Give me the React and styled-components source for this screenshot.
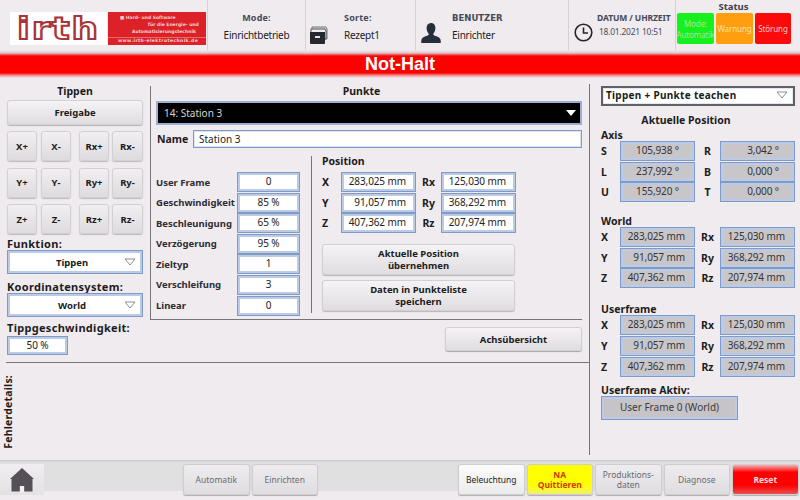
import React from 'react';
import styled, { createGlobalStyle } from 'styled-components';

const PAGE = '#f0ebef';
const LABEL = '#1c1c20';

const axisRows = [
  ['S', '105,938 °', 'R', '3,042 °'],
  ['L', '237,992 °', 'B', '0,000 °'],
  ['U', '155,920 °', 'T', '0,000 °'],
];
const poseRows = [
  ['X', '283,025 mm', 'Rx', '125,030 mm'],
  ['Y', '91,057 mm', 'Ry', '368,292 mm'],
  ['Z', '407,362 mm', 'Rz', '207,974 mm'],
];
const jogRows = [
  ['X+', 'X-', 'Rx+', 'Rx-'],
  ['Y+', 'Y-', 'Ry+', 'Ry-'],
  ['Z+', 'Z-', 'Rz+', 'Rz-'],
];
const pointFields = [
  ['User Frame', '0'],
  ['Geschwindigkeit', '85 %'],
  ['Beschleunigung', '65 %'],
  ['Verzögerung', '95 %'],
  ['Zieltyp', '1'],
  ['Verschleifung', '3'],
  ['Linear', '0'],
];

function Triangle({ dark }) {
  return (
    <svg width="12" height="8" viewBox="0 0 12 8">
      {dark ? (
        <path d="M1 1h10L6 7z" fill="#fff" />
      ) : (
        <path d="M1 1h10L6 7z" fill="#fff" stroke="#8d8d8d" />
      )}
    </svg>
  );
}

function DrawerIcon() {
  return (
    <svg width="19" height="19" viewBox="0 0 19 19">
      <path d="M3 1h14l1 2v10H3z" fill="#d8d8d8" stroke="#77777b" />
      <path d="M2 3h14l1 2v8H2z" fill="#eee" stroke="#55555b" />
      <path d="M1 6h15v11a1 1 0 0 1-1 1H2a1 1 0 0 1-1-1z" fill="#25282c" />
      <rect x="6" y="10" width="5" height="2" fill="#e4e4e4" />
    </svg>
  );
}

function UserIcon() {
  return (
    <svg width="20" height="20" viewBox="0 0 20 20">
      <path
        d="M10 0c3 0 4.400 2.200 4.400 5 0 2.400-.9 4.300-2 5.400v1.700c1 .8 6.400 1.800 7.100 4.400.2 1 .3 2 .3 3.500H.2c0-1.500.1-2.500.3-3.500.7-2.600 6.100-3.600 7.100-4.400v-1.700c-1.100-1.100-2-3-2-5.400C5.600 2.200 7 0 10 0z"
        fill="#26303a"
      />
    </svg>
  );
}

function ClockIcon() {
  return (
    <svg width="19" height="19" viewBox="0 0 19 19" fill="none" stroke="#23262b">
      <circle cx="9.500" cy="9.500" r="8.300" strokeWidth="1.600" />
      <path d="M9.500 4.500v5.500h4.500" strokeWidth="1.600" />
    </svg>
  );
}

function HouseIcon() {
  return (
    <svg width="24" height="24" viewBox="0 0 24 24">
      <path
        d="M12 0L24 11h-1.500v12.500H14.200V18H9.800v5.500H1.500V11H0z"
        fill="#555058"
      />
      <rect x="10" y="18" width="4" height="6" fill="#f4f0f2" />
    </svg>
  );
}

function Field({ value, $gray, $align, $pad, $width }) {
  return (
    <FieldFrame $gray={$gray} $width={$width}>
      <FieldInner $gray={$gray} $align={$align} $pad={$pad}>
        {value}
      </FieldInner>
    </FieldFrame>
  );
}

function PoseGrid({ rows, gray, pad }) {
  return (
    <Pose>
      {rows.map((r) => (
        <React.Fragment key={r[0]}>
          <PoseLabel>{r[0]}</PoseLabel>
          <Field value={r[1]} $gray={gray} $align="right" $pad={pad} />
          <PoseLabel $second>{r[2]}</PoseLabel>
          <Field value={r[3]} $gray={gray} $align="right" $pad={pad} />
        </React.Fragment>
      ))}
    </Pose>
  );
}

export default function App() {
  return (
    <>
      <Global />
      <Screen>
        <Header>
          <Logo>
            <LogoMark>
              <LogoWord>irth</LogoWord>
            </LogoMark>
            <LogoClaim>
              <ClaimLine $indent={12}>■ Hard- und Software</ClaimLine>
              <ClaimLine $indent={40}>für die Energie- und</ClaimLine>
              <ClaimLine $indent={24}>Automatisierungstechnik</ClaimLine>
              <ClaimWeb>www.irth-elektrotechnik.de</ClaimWeb>
            </LogoClaim>
          </Logo>
          <HeadCell $w={98} $center>
            <SoftLabel>Mode:</SoftLabel>
            <HeadValue>Einrichtbetrieb</HeadValue>
          </HeadCell>
          <HeadCell $w={110} $row>
            <HeadIcon $top={26}><DrawerIcon /></HeadIcon>
            <HeadStack $left={16}>
              <SoftLabel>Sorte:</SoftLabel>
              <HeadValue>Rezept1</HeadValue>
            </HeadStack>
          </HeadCell>
          <HeadCell $w={153} $row $pad={5}>
            <HeadIcon $top={23}><UserIcon /></HeadIcon>
            <HeadStack $left={11}>
              <HeadLabel>BENUTZER</HeadLabel>
              <HeadValue>Einrichter</HeadValue>
            </HeadStack>
          </HeadCell>
          <HeadCell $w={107} $row $pad={5}>
            <HeadIcon $top={23}><ClockIcon /></HeadIcon>
            <HeadStack $left={4}>
              <DateLabel>DATUM / UHRZEIT</DateLabel>
              <DateValue>18.01.2021 10:51</DateValue>
            </HeadStack>
          </HeadCell>
          <StatusCell>
            <StatusTitle>Status</StatusTitle>
            <StatusRow>
              <Lamp $bg="#16f01c" $w={37} $fg="#a8e6a0">Mode:<br />Automatik</Lamp>
              <Lamp $bg="#ff9f10" $w={37} $fg="#f6e0a8">Warnung</Lamp>
              <Lamp $bg="#fb0a0a" $w={36} $fg="#f6c8c8">Störung</Lamp>
            </StatusRow>
          </StatusCell>
        </Header>

        <Banner>
          <BannerText>Not-Halt</BannerText>
        </Banner>

        <Main>
          <WorkArea>
            <TopArea>
              <LeftColumn>
                <ColumnTitle>Tippen</ColumnTitle>
                <GrayButton $h={25}>Freigabe</GrayButton>
                <JogGrid>
                  {jogRows.flat().map((j) => (
                    <JogButton key={j}>{j}</JogButton>
                  ))}
                </JogGrid>
                <SideLabel $top={4}>Funktion:</SideLabel>
                <SelectBox>
                  <SelectText>Tippen</SelectText>
                  <Triangle />
                </SelectBox>
                <SideLabel $top={7}>Koordinatensystem:</SideLabel>
                <SelectBox>
                  <SelectText>World</SelectText>
                  <Triangle />
                </SelectBox>
                <SideLabel $top={5}>Tippgeschwindigkeit:</SideLabel>
                <SpeedGap>
                  <Field value="50 %" $width={61} />
                </SpeedGap>
              </LeftColumn>

              <CenterColumn>
                <PointsPanel>
                  <PanelTitle>Punkte</PanelTitle>
                  <PointSelect>
                    <span>14: Station 3</span>
                    <Triangle dark />
                  </PointSelect>
                  <NameRow>
                    <NameLabel>Name</NameLabel>
                    <NameInput>
                      <NameText>Station 3</NameText>
                    </NameInput>
                  </NameRow>
                  <PointBody>
                    <FieldList>
                      {pointFields.map(([l, v]) => (
                        <React.Fragment key={l}>
                          <FieldLabel>{l}</FieldLabel>
                          <Field value={v} />
                        </React.Fragment>
                      ))}
                    </FieldList>
                    <PositionColumn>
                      <PositionTitle>Position</PositionTitle>
                      <PoseWrap>
                        <PoseGrid rows={poseRows} pad={7} />
                      </PoseWrap>
                      <GrayButton $h={31} $top={11}>Aktuelle Position<br />übernehmen</GrayButton>
                      <GrayButton $h={31} $top={5}>Daten in Punkteliste<br />speichern</GrayButton>
                    </PositionColumn>
                  </PointBody>
                </PointsPanel>
                <AxisButton>Achsübersicht</AxisButton>
              </CenterColumn>
            </TopArea>
            <ErrorArea>
              <ErrorLabel>Fehlerdetails:</ErrorLabel>
            </ErrorArea>
          </WorkArea>

          <RightColumn>
            <ModeSelect>
              <span>Tippen + Punkte teachen</span>
              <Triangle />
            </ModeSelect>
            <ActualTitle>Aktuelle Position</ActualTitle>
            <GroupLabel $top={3}>Axis</GroupLabel>
            <PoseGrid rows={axisRows} gray pad={13} />
            <GroupLabel $top={13}>World</GroupLabel>
            <PoseGrid rows={poseRows} gray pad={7} />
            <GroupLabel $top={15}>Userframe</GroupLabel>
            <PoseGrid rows={poseRows} gray pad={7} />
            <GroupLabel $top={7}>Userframe Aktiv:</GroupLabel>
            <ActiveFrame>
              <ActiveInner>User Frame 0 (World)</ActiveInner>
            </ActiveFrame>
          </RightColumn>
        </Main>

        <Footer>
          <HomeButton>
            <HouseIcon />
          </HomeButton>
          <FooterButton $left={137}>Automatik</FooterButton>
          <FooterButton>Einrichten</FooterButton>
          <FooterButton $left={138} $kind="white">Beleuchtung</FooterButton>
          <FooterButton $kind="yellow">NA<br />Quittieren</FooterButton>
          <FooterButton>Produktions-<br />daten</FooterButton>
          <FooterButton>Diagnose</FooterButton>
          <FooterButton $kind="red">Reset</FooterButton>
        </Footer>
      </Screen>
    </>
  );
}

const Global = createGlobalStyle`
  html, body { margin: 0; padding: 0; background: ${PAGE}; }
  * { box-sizing: border-box; }
  body { font-family: "Noto Sans", "DejaVu Sans", sans-serif; color: ${LABEL}; }
`;

const Screen = styled.div`
  width: 800px;
  height: 500px;
  overflow: hidden;
  display: flex;
  flex-direction: column;
  background: ${PAGE};
`;

const Header = styled.header`
  height: 50px;
  flex: none;
  display: flex;
`;

const Logo = styled.div`
  width: 207px;
  padding: 12px 0 5px 10px;
  display: flex;
  gap: 1px;
`;

const LogoMark = styled.div`
  width: 97px;
  background: #fff;
  display: flex;
  align-items: center;
  justify-content: center;
`;

const LogoWord = styled.span`
  font: 700 31px/31px "DejaVu Sans", sans-serif;
  letter-spacing: 1.500px;
  color: #fff;
  -webkit-text-stroke: 2px #a8353a;
  transform: scaleX(1.2);
`;

const LogoClaim = styled.div`
  width: 98px;
  background: #dc2228;
  color: #f6d0d0;
  font: 700 4.500px/6px "DejaVu Sans", sans-serif;
  padding-top: 2px;
  white-space: nowrap;
`;

const ClaimLine = styled.div`
  padding-left: ${(p) => p.$indent}px;
  height: 7px;
  line-height: 7px;
`;

const ClaimWeb = styled.div`
  margin-top: 2px;
  border-top: 1px solid #e86a6e;
  padding: 0 0 0 10px;
  letter-spacing: 0.400px;
`;

const HeadCell = styled.div`
  width: ${(p) => p.$w}px;
  border-left: 1px solid #d4d0d4;
  display: flex;
  flex-direction: ${(p) => (p.$row ? 'row' : 'column')};
  align-items: ${(p) => (p.$row ? 'flex-start' : 'center')};
  padding: ${(p) => (p.$row ? `0 0 0 ${p.$pad || 3}px` : '12px 0 0')};
`;

const HeadIcon = styled.div`
  flex: none;
  display: flex;
  margin-top: ${(p) => p.$top}px;
`;

const HeadStack = styled.div`
  margin: 12px 0 0 ${(p) => p.$left}px;
  display: flex;
  flex-direction: column;
`;

const HeadLabel = styled.div`
  font: 700 8.500px/12px "DejaVu Sans", sans-serif;
  color: #454a58;
  white-space: nowrap;
`;

const SoftLabel = styled.div`
  font-weight: 700;
  font-size: 9px;
  line-height: 12px;
  letter-spacing: 0.200px;
  color: #454a58;
  white-space: nowrap;
`;

const DateLabel = styled.div`
  font-weight: 700;
  font-size: 8.500px;
  line-height: 12px;
  letter-spacing: -0.100px;
  color: #454a58;
  white-space: nowrap;
`;

const HeadValue = styled.div`
  font-size: 10px;
  letter-spacing: -0.250px;
  line-height: 14px;
  margin-top: 4px;
  color: #1d1d1d;
  white-space: nowrap;
`;

const DateValue = styled.div`
  font-size: 8.500px;
  line-height: 12px;
  letter-spacing: -0.250px;
  margin: 2px 0 0 2px;
  color: #4a4d58;
  white-space: nowrap;
`;

const StatusCell = styled.div`
  flex: 1;
  border-left: 1px solid #d4d0d4;
  padding: 1px 0 0 1px;
`;

const StatusTitle = styled.div`
  font-weight: 700;
  font-size: 9.500px;
  line-height: 11px;
  color: #3a3f4c;
  text-align: center;
  width: 113px;
`;

const StatusRow = styled.div`
  display: flex;
  gap: 2px;
  margin-top: 1px;
`;

const Lamp = styled.div`
  width: ${(p) => p.$w}px;
  height: 31px;
  border-radius: 2px;
  background: ${(p) => p.$bg};
  color: ${(p) => p.$fg};
  font-size: 8px;
  letter-spacing: -0.100px;
  line-height: 11px;
  display: flex;
  align-items: center;
  justify-content: center;
  text-align: center;
`;

const Banner = styled.div`
  height: 28px;
  flex: none;
  padding-top: 3px;
  background: linear-gradient(#f0ebef 0, #d9c9cc 3px, #ff0000 6px, #ff0000 23px, #f08080 25px, ${PAGE} 28px);
  display: flex;
  justify-content: center;
`;

const BannerText = styled.div`
  font: 700 18px/22px "Liberation Sans", sans-serif;
  color: #fff;
`;

const Main = styled.main`
  height: 382px;
  flex: none;
  display: flex;
`;

const WorkArea = styled.div`
  width: 589px;
  display: flex;
  flex-direction: column;
`;

const TopArea = styled.div`
  height: 285px;
  margin-left: 6px;
  border-bottom: 1px solid #77757a;
  display: flex;
`;

const LeftColumn = styled.div`
  width: 144px;
  padding: 6px 7px 0 1px;
  display: flex;
  flex-direction: column;
`;

const ColumnTitle = styled.div`
  font-weight: 700;
  font-size: 10.500px;
  line-height: 14px;
  text-align: center;
  margin-bottom: 2px;
`;

const GrayButton = styled.div`
  height: ${(p) => p.$h}px;
  margin-top: ${(p) => p.$top || 0}px;
  flex: none;
  display: flex;
  align-items: center;
  justify-content: center;
  text-align: center;
  font-weight: 700;
  font-size: 9.500px;
  line-height: 11.500px;
  border: 1px solid #d2d0d3;
  border-radius: 3px;
  background: linear-gradient(#f5f3f5, #dfdddf);
  box-shadow: 0 1px 1px #b8b6b8;
`;

const JogGrid = styled.div`
  display: grid;
  grid-template-columns: 30px 30px 30px 31px;
  grid-auto-rows: 30px;
  column-gap: 4px;
  row-gap: 6.500px;
  margin-top: 6px;
  & > :nth-child(4n + 3) {
    margin-left: 4px;
    margin-right: -4px;
  }
  & > :nth-child(4n) {
    margin-left: 3px;
    margin-right: -3px;
  }
`;

const JogButton = styled.div`
  display: flex;
  align-items: center;
  justify-content: center;
  font-weight: 700;
  font-size: 9.500px;
  border: 1px solid #d2d0d3;
  border-radius: 3px;
  background: linear-gradient(#f1eff1, #dddbdd);
  box-shadow: 0 1px 1px #bcbabc;
`;

const SideLabel = styled.div`
  font-weight: 700;
  font-size: 11px;
  line-height: 12px;
  letter-spacing: 0.300px;
  margin-top: ${(p) => p.$top}px;
  white-space: nowrap;
`;

const frame = `
  border: 1px solid #7f9ac6;
  background: #bccbe5;
  padding: 2px;
`;

const SelectBox = styled.div`
  ${frame}
  height: 24px;
  flex: none;
  display: flex;
  align-items: center;
  justify-content: space-between;
  padding-right: 6px;
  background: linear-gradient(#fff, #fff);
  box-shadow: inset 0 0 0 2px #bccbe5;
`;

const SelectText = styled.div`
  flex: 1;
  padding-left: 10px;
  text-align: center;
  font-weight: 700;
  font-size: 9.500px;
`;

const SpeedGap = styled.div`
  margin-top: 2px;
  height: 19px;
  display: flex;
`;

const FieldFrame = styled.div`
  ${frame}
  width: ${(p) => (p.$width ? `${p.$width}px` : '100%')};
  height: 100%;
  min-height: 0;
`;

const FieldInner = styled.div`
  height: 100%;
  background: ${(p) => (p.$gray ? '#c9c6c9' : '#fff')};
  font-size: 10px;
  letter-spacing: -0.100px;
  line-height: 13px;
  color: ${(p) => (p.$gray ? '#33343a' : '#222')};
  text-align: ${(p) => p.$align || 'center'};
  padding-right: ${(p) => p.$pad || 0}px;
  white-space: nowrap;
`;

const CenterColumn = styled.div`
  width: 433px;
  display: flex;
  flex-direction: column;
  align-items: flex-end;
`;

const PointsPanel = styled.section`
  width: 432px;
  height: 234px;
  margin-top: 8px;
  align-self: flex-start;
  border-left: 1px solid #77757a;
  border-bottom: 1px solid #77757a;
  padding-left: 5px;
`;

const PanelTitle = styled.div`
  font-weight: 700;
  font-size: 10.500px;
  line-height: 10px;
  text-align: center;
  margin-bottom: 5px;
  padding-right: 15px;
`;

const PointSelect = styled.div`
  height: 24px;
  border: 2px solid #9db0d2;
  background: #000;
  color: #d8d8d8;
  font-size: 10px;
  display: flex;
  align-items: center;
  justify-content: space-between;
  padding: 0 3px 0 6px;
`;

const NameRow = styled.div`
  display: flex;
  align-items: center;
  height: 18px;
  margin-top: 5px;
`;

const NameLabel = styled.div`
  width: 37px;
  padding-left: 1px;
  font-weight: 700;
  font-size: 10.500px;
`;

const NameInput = styled.div`
  ${frame}
  flex: 1;
  height: 18px;
  background: #fff;
  box-shadow: inset 0 0 0 1px #dbe3f0;
`;

const NameText = styled.div`
  font-size: 10px;
  line-height: 12px;
  padding-left: 3px;
`;

const PointBody = styled.div`
  display: flex;
  margin-top: 8px;
`;

const FieldList = styled.div`
  width: 155px;
  padding-top: 16px;
  display: grid;
  grid-template-columns: 81px 63px;
  grid-auto-rows: 20px;
  row-gap: 0.600px;
  align-items: center;
`;

const FieldLabel = styled.div`
  font-weight: 700;
  font-size: 9.500px;
  white-space: nowrap;
  color: #2c2c34;
`;

const PositionColumn = styled.div`
  width: 205px;
  height: 157px;
  border-left: 1px solid #77757a;
  padding-left: 10px;
  padding-right: 1px;
  display: flex;
  flex-direction: column;
`;

const PositionTitle = styled.div`
  font-weight: 700;
  font-size: 10.500px;
  line-height: 10px;
  margin-bottom: 6px;
`;

const PoseWrap = styled.div`
  width: 193px;
  flex: none;
`;

const Pose = styled.div`
  display: grid;
  grid-template-columns: 19px 75px 25px 75px;
  grid-auto-rows: 20px;
  row-gap: 0.600px;
  align-items: stretch;
`;

const PoseLabel = styled.div`
  display: flex;
  align-items: center;
  justify-content: ${(p) => (p.$second ? 'center' : 'flex-start')};
  font-weight: 700;
  font-size: 10.500px;
`;

const AxisButton = styled.div`
  width: 137px;
  height: 24px;
  margin: 7px 1px 0 0;
  display: flex;
  align-items: center;
  justify-content: center;
  font-weight: 700;
  font-size: 9.500px;
  border: 1px solid #d2d0d3;
  border-radius: 3px;
  background: linear-gradient(#f5f3f5, #dfdddf);
  box-shadow: 0 1px 1px #a8a6a8;
`;

const ErrorArea = styled.div`
  flex: 1;
  padding: 12px 0 0 3px;
`;

const ErrorLabel = styled.div`
  writing-mode: vertical-rl;
  transform: rotate(180deg);
  font-weight: 700;
  font-size: 10.500px;
  letter-spacing: 0.200px;
  line-height: 11px;
`;

const RightColumn = styled.aside`
  flex: 1;
  margin: 6px 0 5px;
  border-left: 1px solid #77757a;
  padding: 2px 5px 0 11px;
  display: flex;
  flex-direction: column;
`;

const ModeSelect = styled.div`
  height: 20px;
  flex: none;
  border: 2px solid #5e6066;
  background: #fff;
  box-shadow: inset 0 0 0 1px #e4e8f0;
  display: flex;
  align-items: center;
  justify-content: space-between;
  padding: 0 5px 2px 3px;
  font-weight: 700;
  font-size: 10px;
  letter-spacing: 0.300px;
`;

const ActualTitle = styled.div`
  font-weight: 700;
  font-size: 10.500px;
  line-height: 12px;
  text-align: center;
  margin-top: 8px;
  padding-right: 24px;
`;

const GroupLabel = styled.div`
  font-weight: 700;
  font-size: 10.500px;
  line-height: 12px;
  margin-top: ${(p) => p.$top}px;
`;

const ActiveFrame = styled.div`
  ${frame}
  width: 137px;
  height: 24px;
  flex: none;
`;

const ActiveInner = styled.div`
  height: 100%;
  background: #c6c4c6;
  font-size: 10px;
  line-height: 17px;
  text-align: center;
  color: #3a3a40;
`;

const Footer = styled.footer`
  height: 40px;
  flex: none;
  display: flex;
  align-items: flex-start;
  gap: 2px;
  padding-top: 4px;
  background: linear-gradient(#cfcdd0 0, #cfcdd0 1px, #e1e0e1 2px, #e1e0e1 31px, ${PAGE} 31px);
`;

const HomeButton = styled.div`
  width: 44px;
  height: 31px;
  flex: none;
  display: flex;
  align-items: center;
  justify-content: center;
  background: linear-gradient(#efedef, #e4e2e4);
`;

const footerSkins = {
  white: 'background: linear-gradient(#fbfbfb, #ebebeb); color: #222;',
  yellow:
    'background: linear-gradient(#ffff00 70%, #f0ee70); color: #d03a00; font-weight: 700;',
  red: 'background: linear-gradient(#f3b0b0 0, #ff0000 25%, #ff0000 70%, #e85050); color: #f4dcdc; font-weight: 700;',
  plain: 'background: linear-gradient(#eeecee, #dfdddf); color: #6a6a70;',
};

const FooterButton = styled.div`
  width: 66.500px;
  height: 31px;
  flex: none;
  margin-left: ${(p) => p.$left || 0}px;
  display: flex;
  align-items: center;
  justify-content: center;
  text-align: center;
  font-size: 8.500px;
  line-height: 9.500px;
  border: 1px solid #cfcdd0;
  border-radius: 3px;
  box-shadow: 0 1px 1px #aeacae;
  ${(p) => footerSkins[p.$kind || 'plain']}
`;
